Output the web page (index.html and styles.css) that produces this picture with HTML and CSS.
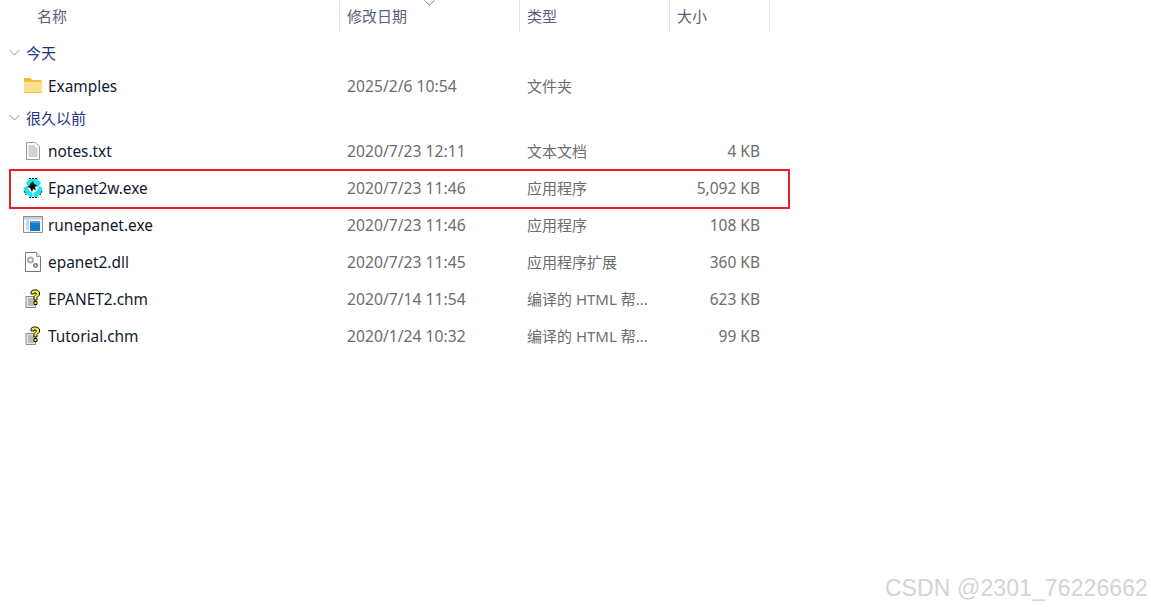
FILE: index.html
```html
<!DOCTYPE html>
<html lang="zh-CN">
<head>
<meta charset="utf-8">
<title>文件列表</title>
<link rel="stylesheet" href="styles.css">
</head>
<body>
<div class="explorer">
  <div class="header">
    <div class="hcell col-name">名称</div>
    <div class="hcell col-date">修改日期<svg class="sort" width="11" height="6" viewBox="0 0 11 6"><path d="M.5.5 5.500 5 10.500.5" fill="none" stroke="#7a7f87"/></svg></div>
    <div class="hcell col-type">类型</div>
    <div class="hcell col-size">大小</div>
  </div>

  <div class="group first"><svg class="chev" width="11" height="7" viewBox="0 0 11 7"><path d="M.5 1 5.500 6 10.500 1" fill="none" stroke="#8a8f96"/></svg>今天</div>
  <div class="row short">
    <div class="col-name name"><svg class="icon" width="20" height="18" viewBox="0 0 20 18"><path d="M1 1h6l2 2h9v2H1z" fill="#f5b82e"/><path d="M1 5h18v10H1z" fill="#fcdf8c"/><path d="M1 4h18v1H1zM1 15h18v1H1z" fill="#f0bf50"/></svg>Examples</div>
    <div class="col-date">2025/2/6 10:54</div>
    <div class="col-type">文件夹</div>
    <div class="col-size"></div>
  </div>

  <div class="group"><svg class="chev" width="11" height="7" viewBox="0 0 11 7"><path d="M.5 1 5.500 6 10.500 1" fill="none" stroke="#8a8f96"/></svg>很久以前</div>
  <div class="row">
    <div class="col-name name"><svg class="icon" width="20" height="20" viewBox="0 0 20 20"><path d="M3.500 1.500h9l4 4v13h-13z" fill="#fbfbfb" stroke="#9a9a9a"/><path d="M5.500 5h6M5.500 7h9M5.500 9h9M5.500 11h9M5.500 13h9M5.500 15h9" stroke="#a8a8a8"/></svg>notes.txt</div>
    <div class="col-date">2020/7/23 12:11</div>
    <div class="col-type">文本文档</div>
    <div class="col-size">4 KB</div>
  </div>
  <div class="row marked">
    <div class="col-name name"><svg class="icon" width="20" height="20" viewBox="0 0 20 20"><path d="M6 1h8l4 4-3 4H6L3 5z" fill="#19e6ee"/><path d="M.5 10l3-2 3 5 3 2v4H7l-5-4zM19.500 10l-3-2-3 5-3 2v4h3l5-4z" fill="#19e6ee"/><path d="M7 6l3-3 1 3 3 1-2 2 1 3-3-1-1 3-2-4-3-1 3-2z" fill="#111"/><path d="M6 .5h8M1 13l2 4M19 13l-2 4M6 19.500h8" stroke="#111" stroke-dasharray="2 1" fill="none"/></svg>Epanet2w.exe</div>
    <div class="col-date">2020/7/23 11:46</div>
    <div class="col-type">应用程序</div>
    <div class="col-size">5,092 KB</div>
  </div>
  <div class="row">
    <div class="col-name name"><svg class="icon" width="20" height="20" viewBox="0 0 20 20"><path d="M.5 1.500h19v16H.500z" fill="#f4f5f6" stroke="#8b8f94"/><path d="M1 2h18v2.500H1z" fill="#c9ccd0"/><path d="M3 6h3M3 8h3M3 10h3M3 12h3M3 14h3" stroke="#b5b9be"/><path d="M7 6h10v10H7z" fill="#1479c9"/><path d="M7 6h10v2H7z" fill="#4aa3e6"/></svg>runepanet.exe</div>
    <div class="col-date">2020/7/23 11:46</div>
    <div class="col-type">应用程序</div>
    <div class="col-size">108 KB</div>
  </div>
  <div class="row">
    <div class="col-name name"><svg class="icon" width="20" height="20" viewBox="0 0 20 20"><path d="M2.500.5h11l4 4v15h-15z" fill="#fff" stroke="#777"/><path d="M13.500.5v4h4" fill="#eee" stroke="#999"/><circle cx="7.500" cy="8" r="2.500" fill="#fff" stroke="#a4adb8" stroke-width="2"/><circle cx="12.500" cy="13.500" r="1.700" fill="#fff" stroke="#70767d" stroke-width="1.500"/></svg>epanet2.dll</div>
    <div class="col-date">2020/7/23 11:45</div>
    <div class="col-type">应用程序扩展</div>
    <div class="col-size">360 KB</div>
  </div>
  <div class="row">
    <div class="col-name name"><svg class="icon" width="20" height="20" viewBox="0 0 20 20"><path d="M3 7.500h9.500v11H3z" fill="#e6e6e6" stroke="#8a8a8a"/><path d="M5 10h6M5 12h6M5 14h6M5 16h6" stroke="#8f8f8f"/><path d="M8 5V2.500L10 1h4l2.500 2v3L14 8.500V11h-3V7.500L13 5.500V4h-2v1z" fill="#f7ee2b" stroke="#111"/><path d="M11 12.500h3v3h-3z" fill="#f7ee2b" stroke="#111"/></svg>EPANET2.chm</div>
    <div class="col-date">2020/7/14 11:54</div>
    <div class="col-type">编译的 HTML 帮...</div>
    <div class="col-size">623 KB</div>
  </div>
  <div class="row">
    <div class="col-name name"><svg class="icon" width="20" height="20" viewBox="0 0 20 20"><path d="M3 7.500h9.500v11H3z" fill="#e6e6e6" stroke="#8a8a8a"/><path d="M5 10h6M5 12h6M5 14h6M5 16h6" stroke="#8f8f8f"/><path d="M8 5V2.500L10 1h4l2.500 2v3L14 8.500V11h-3V7.500L13 5.500V4h-2v1z" fill="#f7ee2b" stroke="#111"/><path d="M11 12.500h3v3h-3z" fill="#f7ee2b" stroke="#111"/></svg>Tutorial.chm</div>
    <div class="col-date">2020/1/24 10:32</div>
    <div class="col-type">编译的 HTML 帮...</div>
    <div class="col-size">99 KB</div>
  </div>
</div>
<div class="watermark">CSDN @2301_76226662</div>
</body>
</html>
```
FILE: styles.css
```css
html, body {
  margin: 0;
  height: 100%;
  overflow: hidden;
  background: #fff;
}
body {
  position: relative;
  font-family: "Noto Sans", "Noto Sans CJK SC", sans-serif;
  font-size: 15.500px;
  color: #6d6d6d;
}
.explorer {
  width: 770px;
  display: flex;
  flex-direction: column;
}
.header {
  display: flex;
  height: 32px;
  color: #566176;
  font-size: 15px;
}
.hcell {
  position: relative;
  box-sizing: border-box;
  height: 32px;
  padding-bottom: 2px;
  display: flex;
  align-items: center;
  border-right: 1px solid #e5e5e5;
}
.col-name { width: 340px; flex: none; }
.col-date { width: 180px; flex: none; padding-left: 7px; box-sizing: border-box; font-size: 15.700px; }
.col-type { width: 150px; flex: none; padding-left: 7px; box-sizing: border-box; font-size: 15px; }
.col-size { width: 100px; flex: none; box-sizing: border-box; padding-right: 10px; text-align: right; }
.hcell.col-name { padding-left: 37px; }
.hcell.col-date { font-size: 15px; }
.hcell.col-size { padding-left: 7px; padding-right: 0; text-align: left; }
.sort {
  position: absolute;
  left: 84px;
  top: 0;
}
.group {
  height: 30px;
  display: flex;
  align-items: center;
  padding-left: 9px;
  gap: 6px;
  font-size: 15px;
  color: #1e3287;
}
.group.first { margin: 5px 0 2px; }
.row {
  height: 37px;
  display: flex;
  align-items: center;
  position: relative;
}
.row.short { height: 33px; }
.row.marked::after {
  content: "";
  position: absolute;
  left: 9px;
  top: 0;
  width: 781px;
  height: 40px;
  box-sizing: border-box;
  border: 2px solid #ec1c2a;
}
.name {
  display: flex;
  align-items: center;
  padding-left: 23px;
  padding-top: 2px;
  box-sizing: border-box;
  gap: 5px;
  color: #101a2c;
  font-size: 15.400px;
}
.icon { margin-top: -2px; }
.watermark {
  position: absolute;
  right: 3px;
  top: 575px;
  font-family: "Liberation Sans", sans-serif;
  font-size: 23px;
  color: #d4d4d4;
  letter-spacing: 0.100px;
}
```
